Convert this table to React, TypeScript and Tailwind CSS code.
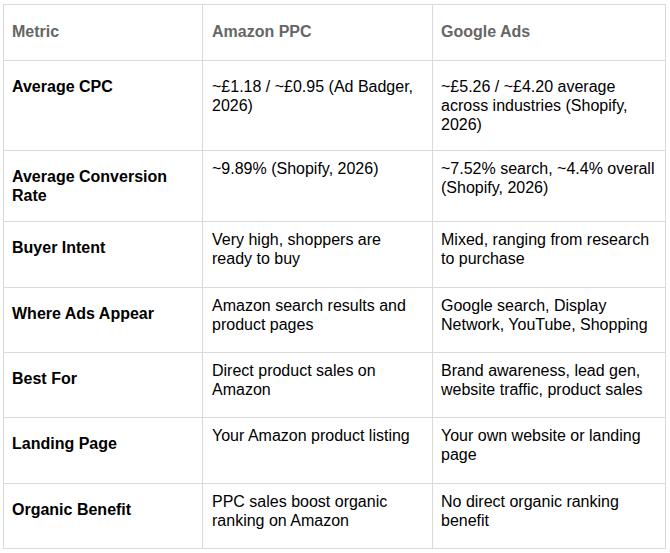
import React from "react";

type Row = {
  label: string;
  amazon: string;
  google: string;
  height: string;
  dataPad: string;
};

const rows: Row[] = [
  {
    label: "Average CPC",
    amazon: "~£1.18 / ~£0.95 (Ad Badger, 2026)",
    google: "~£5.26 / ~£4.20 average across industries (Shopify, 2026)",
    height: "h-[90px]",
    dataPad: "pt-[16px]",
  },
  {
    label: "Average Conversion Rate",
    amazon: "~9.89% (Shopify, 2026)",
    google: "~7.52% search, ~4.4% overall (Shopify, 2026)",
    height: "h-[71px]",
    dataPad: "pt-[8px]",
  },
  {
    label: "Buyer Intent",
    amazon: "Very high, shoppers are ready to buy",
    google: "Mixed, ranging from research to purchase",
    height: "h-[66px]",
    dataPad: "pt-[8px]",
  },
  {
    label: "Where Ads Appear",
    amazon: "Amazon search results and product pages",
    google: "Google search, Display Network, YouTube, Shopping",
    height: "h-[65px]",
    dataPad: "pt-[8px]",
  },
  {
    label: "Best For",
    amazon: "Direct product sales on Amazon",
    google: "Brand awareness, lead gen, website traffic, product sales",
    height: "h-[65px]",
    dataPad: "pt-[8px]",
  },
  {
    label: "Landing Page",
    amazon: "Your Amazon product listing",
    google: "Your own website or landing page",
    height: "h-[66px]",
    dataPad: "pt-[8px]",
  },
  {
    label: "Organic Benefit",
    amazon: "PPC sales boost organic ranking on Amazon",
    google: "No direct organic ranking benefit",
    height: "h-[64px]",
    dataPad: "pt-[8px]",
  },
];

export default function App() {
  return (
    <div className="min-h-screen bg-white pl-[3px] pt-[4px] font-['Liberation_Sans',Arial,sans-serif] text-[16px] leading-[19px] text-black">
      <div className="w-[663px] border border-[#dadada]">
        {/* header */}
        <div className="grid h-[56px] grid-cols-[199px_230px_232px] border-b border-[#dadada] font-bold text-[#666666]">
          <div className="border-r border-[#dadada] pl-[8px] pt-[17px]">Metric</div>
          <div className="border-r border-[#dadada] pl-[9px] pt-[17px]">Amazon PPC</div>
          <div className="pl-[8px] pt-[17px]">Google Ads</div>
        </div>
        {rows.map((r, i) => (
          <div
            key={r.label}
            className={`grid grid-cols-[199px_230px_232px] ${r.height} ${
              i < rows.length - 1 ? "border-b border-[#dadada]" : ""
            }`}
          >
            <div className="border-r border-[#dadada] pl-[8px] pr-[8px] pt-[16px] font-bold">
              {r.label}
            </div>
            <div className={`border-r border-[#dadada] pl-[9px] pr-[8px] ${r.dataPad}`}>
              {r.amazon}
            </div>
            <div className={`pl-[8px] pr-[8px] ${r.dataPad}`}>{r.google}</div>
          </div>
        ))}
      </div>
    </div>
  );
}
